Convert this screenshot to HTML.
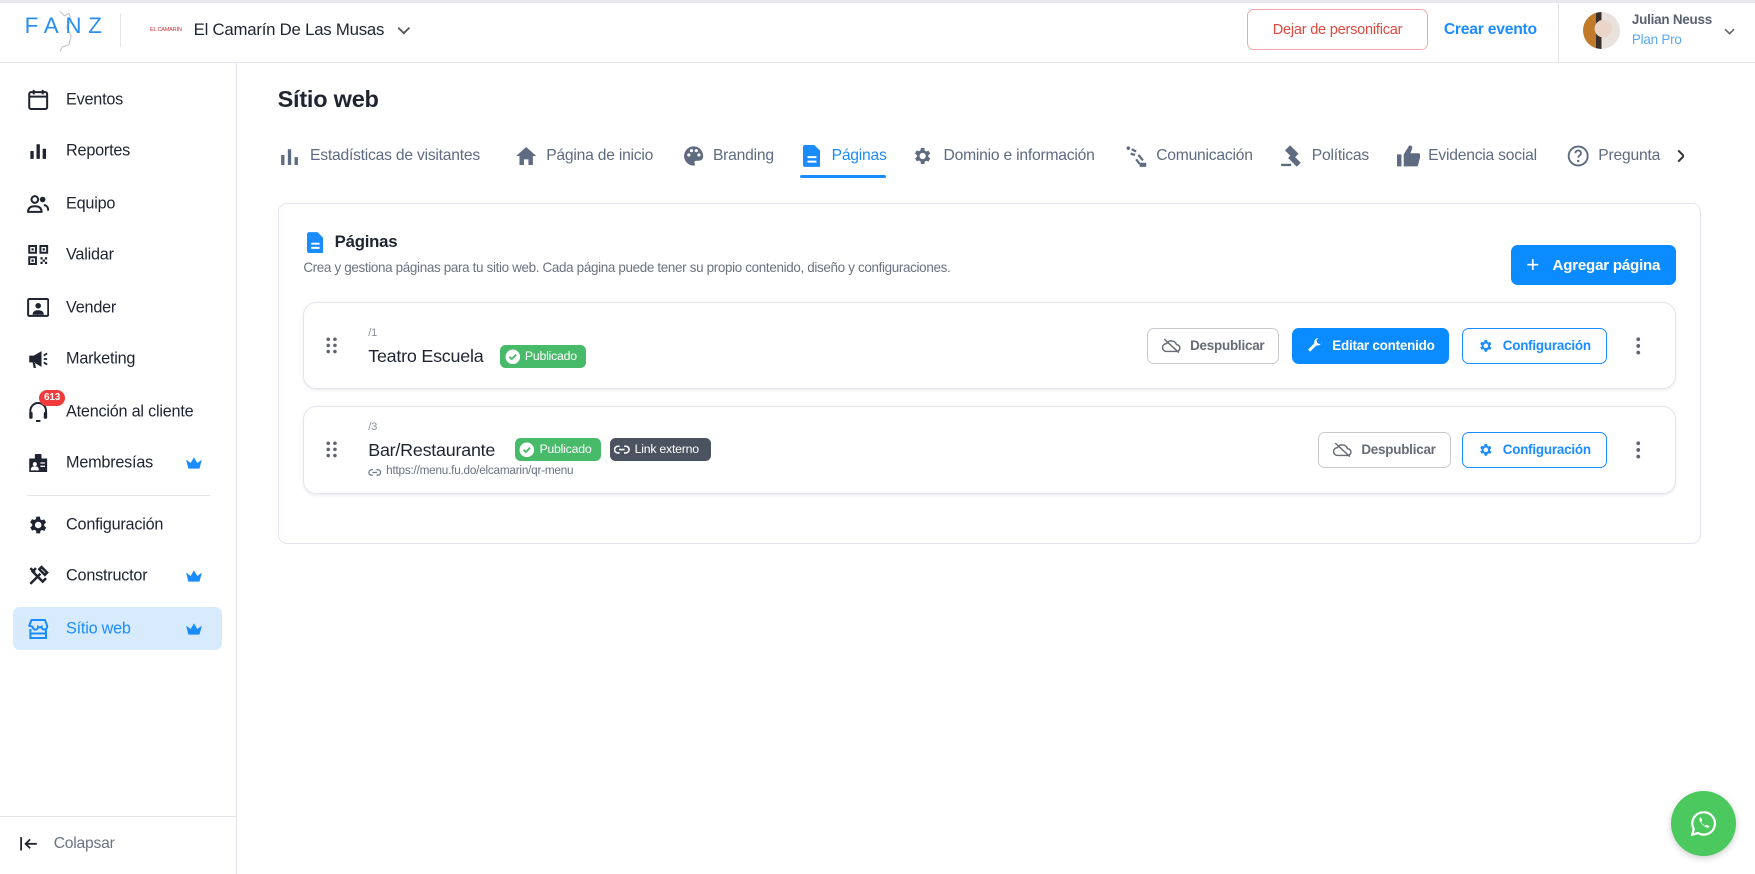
<!DOCTYPE html>
<html><head><meta charset="utf-8"><style>
*{box-sizing:border-box;margin:0;padding:0}
html,body{width:1755px;height:874px;overflow:hidden;background:#fff}
#root{zoom:1.11926;width:1568px;height:781px;position:relative;font-family:"Liberation Sans",sans-serif;color:#1f2430;letter-spacing:-0.2px}
.a{position:absolute;white-space:nowrap}
.topline{left:0;top:0;width:1568px;height:3px;background:#e8e8ec}
.hb{left:0;top:55px;width:1568px;height:1px;background:#e3e5ea}
.sb{left:211px;top:56px;width:1px;height:725px;background:#e3e5ea}
.nav{left:59px;font-size:14.5px;color:#1f2430;transform:translateY(-50%)}
.ico{left:24px;transform:translateY(-50%)}
.crown{left:165px;transform:translateY(-50%)}
.tab{font-size:14px;color:#5f6b80;transform:translateY(-50%)}
.ti{transform:translateY(-50%)}
.btn{border-radius:6px;font-size:12px;font-weight:bold;display:flex;align-items:center;justify-content:center;gap:8px}
.row{border:1px solid #e3e6ee;border-radius:12px;box-shadow:0 1px 3px rgba(0,0,0,.08);background:#fff}
.badge{border-radius:5px;font-size:11px;color:#fff;display:flex;align-items:center;gap:4px;padding-left:4px;height:21px}
</style></head><body><div id="root">
<div class="a topline"></div>
<div class="a hb"></div>
<div class="a sb"></div>
<!-- logo -->
<svg class="a" style="left:46px;top:8px" width="24" height="40" viewBox="0 0 24 40"><path d="M8 2 L12 6 L16 4 L18 10 L14 16 L18 24 L16 32 L10 34 L8 38" fill="none" stroke="#c2c6cc" stroke-width="1"/></svg>
<div class="a" style="left:22px;top:12px;font-size:20px;letter-spacing:6px;color:#2a8ff0;font-weight:300">FANZ</div>
<div class="a" style="left:107px;top:12px;width:1px;height:30px;background:#e3e5ea"></div>
<div class="a" style="left:134px;top:24px;font-size:5px;color:#d0343a">EL CAMARÍN</div>
<div class="a" style="left:173px;top:18px;font-size:15px;font-weight:500">El Camarín De Las Musas</div>
<svg class="a" style="left:354px;top:20px" width="14" height="14" viewBox="0 0 14 14"><path d="M2 5l5 5 5-5" fill="none" stroke="#555" stroke-width="1.6"/></svg>
<div class="a btn" style="left:1114px;top:8px;width:162px;height:37px;border:1px solid #f0a9a5;color:#e0483e;font-size:13px;font-weight:500">Dejar de personificar</div>
<div class="a" style="left:1290px;top:19px;font-size:14px;font-weight:bold;color:#1a8cff">Crear evento</div>
<div class="a" style="left:1392px;top:0;width:1px;height:55px;background:#e3e5ea"></div>
<div class="a" style="left:1414px;top:11px;width:33px;height:33px;border-radius:50%;background:radial-gradient(circle at 55% 45%,#e9d6c8 0 30%,transparent 31%),linear-gradient(90deg,#c07a2a 0 35%,#3a2e2a 35% 50%,#e9e2dc 50%)"></div>
<div class="a" style="left:1458px;top:11px;font-size:12px;font-weight:bold;color:#5a6170">Julian Neuss</div>
<div class="a" style="left:1458px;top:29px;font-size:12px;color:#5aa8f5">Plan Pro</div>
<svg class="a" style="left:1540px;top:24px" width="10" height="8" viewBox="0 0 10 8"><path d="M1 2l4 4 4-4" fill="none" stroke="#666" stroke-width="1.4"/></svg>

<!-- sidebar -->
<svg class="a ico" style="top:89px" width="20" height="20" viewBox="0 0 20 20"><rect x="2" y="3" width="16" height="15" rx="1.5" fill="none" stroke="#1f2430" stroke-width="1.8"/><path d="M2 7h16M6 1v4M14 1v4" stroke="#1f2430" stroke-width="1.8"/></svg>
<div class="a nav" style="top:89px">Eventos</div>
<svg class="a ico" style="top:135px" width="20" height="20" viewBox="0 0 20 20"><path d="M3 10h3v7H3zM8.5 4h3v13h-3zM14 8h3v9h-3z" fill="#1f2430"/></svg>
<div class="a nav" style="top:135px">Reportes</div>
<svg class="a ico" style="top:182px" width="20" height="20" viewBox="0 0 20 20"><circle cx="7" cy="6" r="3" fill="none" stroke="#1f2430" stroke-width="1.8"/><path d="M1 17c0-4 3-5 6-5s6 1 6 5z" fill="none" stroke="#1f2430" stroke-width="1.8"/><circle cx="14" cy="6" r="2.5" fill="#1f2430"/><path d="M15 11c2 0 4 1.5 4 5" stroke="#1f2430" stroke-width="1.8" fill="none"/></svg>
<div class="a nav" style="top:182px">Equipo</div>
<svg class="a ico" style="top:228px" width="20" height="20" viewBox="0 0 20 20"><path d="M2 2h6v6H2zM12 2h6v6h-6zM2 12h6v6H2z" fill="none" stroke="#1f2430" stroke-width="1.8"/><path d="M12 12h2v2h-2zM16 12h2v2h-2zM14 14h2v2h-2zM12 16h2v2h-2zM16 16h2v2h-2zM4 4h2v2H4zM14 4h2v2h-2zM4 14h2v2H4z" fill="#1f2430"/></svg>
<div class="a nav" style="top:228px">Validar</div>
<svg class="a ico" style="top:275px" width="20" height="20" viewBox="0 0 20 20"><rect x="1" y="2" width="18" height="15" rx="1" fill="none" stroke="#1f2430" stroke-width="1.8"/><circle cx="10" cy="8" r="2.5" fill="#1f2430"/><path d="M5 16c0-3 2-4 5-4s5 1 5 4z" fill="#1f2430"/></svg>
<div class="a nav" style="top:275px">Vender</div>
<svg class="a ico" style="top:321px" width="20" height="20" viewBox="0 0 20 20"><path d="M2 7h4l7-4v14l-7-4H2z M5 13l1 5h2l-1-5" fill="#1f2430"/><path d="M15 7l3-2M15 10h3M15 13l3 2" stroke="#1f2430" stroke-width="1.6"/></svg>
<div class="a nav" style="top:321px">Marketing</div>
<svg class="a ico" style="top:368px" width="20" height="20" viewBox="0 0 20 20"><path d="M3 12V9a7 7 0 0114 0v3" fill="none" stroke="#1f2430" stroke-width="1.8"/><rect x="2" y="10" width="3" height="6" rx="1" fill="#1f2430"/><rect x="15" y="10" width="3" height="6" rx="1" fill="#1f2430"/><path d="M8 18h4" stroke="#1f2430" stroke-width="1.8"/></svg>
<div class="a" style="left:35px;top:348px;width:23px;height:15px;border-radius:8px;background:#ef3b3b;color:#fff;font-size:9px;font-weight:bold;text-align:center;line-height:15px">613</div>
<div class="a nav" style="top:368px">Atención al cliente</div>
<svg class="a ico" style="top:414px" width="20" height="20" viewBox="0 0 20 20"><path d="M2 6h16v12H2z" fill="#1f2430"/><rect x="7" y="2" width="6" height="6" rx="1" fill="#1f2430"/><circle cx="7" cy="11" r="1.8" fill="#fff"/><path d="M4 16c0-2 1.5-2.5 3-2.5s3 .5 3 2.5zM12 10h4M12 13h4" stroke="#fff" fill="#fff" stroke-width="1.2"/></svg>
<div class="a nav" style="top:414px">Membresías</div>
<div class="a" style="left:24px;top:442px;width:164px;height:1px;background:#e3e5ea"></div>
<svg class="a ico" style="top:469px" width="20" height="20" viewBox="0 0 24 24"><path fill="#1f2430" d="M19.4 13a7.5 7.5 0 000-2l2.1-1.6-2-3.5-2.5 1a7 7 0 00-1.7-1L15 3h-4l-.4 2.7a7 7 0 00-1.7 1l-2.5-1-2 3.5L6.6 11a7.5 7.5 0 000 2l-2.1 1.6 2 3.5 2.5-1a7 7 0 001.7 1L11 21h4l.4-2.7a7 7 0 001.7-1l2.5 1 2-3.5zM13 15.5a3.5 3.5 0 110-7 3.5 3.5 0 010 7z" transform="translate(-1 0)"/></svg>
<div class="a nav" style="top:469px">Configuración</div>
<svg class="a ico" style="top:515px" width="20" height="20" viewBox="0 0 20 20"><path d="M3 17L12 8M8 3l-3 3 9 9 3-3M13 2l5 5-2 2-5-5z M3 3l4 4" stroke="#1f2430" stroke-width="2.2" fill="none"/></svg>
<div class="a nav" style="top:515px">Constructor</div>
<div class="a" style="left:12px;top:542px;width:186px;height:39px;border-radius:6px;background:#d7ebfd"></div>
<svg class="a ico" style="top:562px" width="20" height="20" viewBox="0 0 20 20"><path d="M2 7l2-5h12l2 5v1a2.5 2.5 0 01-5 0 2.5 2.5 0 01-3 0 2.5 2.5 0 01-5 0z" fill="none" stroke="#1a8cff" stroke-width="1.8"/><path d="M3 10v8h14v-8M3 14h14" fill="none" stroke="#1a8cff" stroke-width="1.8"/></svg>
<div class="a nav" style="top:562px;color:#1a8cff">Sítio web</div>
<svg class="a crown" style="top:414px" width="16" height="12" viewBox="0 0 16 12"><path d="M1 3l4 3 3-5 3 5 4-3-2 8H3z" fill="#1a8cff"/></svg>
<svg class="a crown" style="top:515px" width="16" height="12" viewBox="0 0 16 12"><path d="M1 3l4 3 3-5 3 5 4-3-2 8H3z" fill="#1a8cff"/></svg>
<svg class="a crown" style="top:562px" width="16" height="12" viewBox="0 0 16 12"><path d="M1 3l4 3 3-5 3 5 4-3-2 8H3z" fill="#1a8cff"/></svg>
<div class="a" style="left:0;top:729px;width:211px;height:1px;background:#e3e5ea"></div>
<svg class="a" style="left:18px;top:747px" width="16" height="14" viewBox="0 0 16 14"><path d="M1 1v12M15 7H5M9 3L5 7l4 4" fill="none" stroke="#1f2430" stroke-width="1.6"/></svg>
<div class="a" style="left:48px;top:746px;font-size:14px;color:#6b7280">Colapsar</div>

<!-- main -->
<div class="a" style="left:248px;top:77px;font-size:21px;font-weight:600">Sítio web</div>
<svg class="a ti" style="left:250px;top:139px" width="18" height="18" viewBox="0 0 18 18"><path d="M1 8h3v9H1zM7 3h3v14H7zM13 10h3v7h-3z" fill="#5f6b80"/></svg>
<div class="a tab" style="left:277px;top:139px">Estadísticas de visitantes</div>
<svg class="a ti" style="left:460px;top:139px" width="20" height="18" viewBox="0 0 20 18"><path d="M10 1L1 9h3v8h4v-5h4v5h4V9h3z" fill="#5f6b80"/></svg>
<div class="a tab" style="left:488px;top:139px">Página de inicio</div>
<svg class="a ti" style="left:610px;top:139px" width="19" height="19" viewBox="0 0 20 20"><path d="M10 1a9 9 0 000 18c1.2 0 1.6-1 1-2-.7-1 0-2.5 1.5-2.5H15a4 4 0 004-4C19 5 15 1 10 1z" fill="#5f6b80"/><circle cx="5.5" cy="9" r="1.5" fill="#fff"/><circle cx="8" cy="5" r="1.5" fill="#fff"/><circle cx="12.5" cy="5" r="1.5" fill="#fff"/><circle cx="15" cy="9" r="1.5" fill="#fff"/></svg>
<div class="a tab" style="left:637px;top:139px">Branding</div>
<svg class="a ti" style="left:717px;top:139px" width="16" height="20" viewBox="0 0 16 20"><path d="M2 0h8l6 6v12a2 2 0 01-2 2H2a2 2 0 01-2-2V2a2 2 0 012-2z" fill="#1a8cff"/><path d="M4 11h8M4 15h8" stroke="#fff" stroke-width="1.8"/></svg>
<div class="a tab" style="left:743px;top:139px;color:#1a8cff">Páginas</div>
<div class="a" style="left:715px;top:156px;width:77px;height:3px;border-radius:2px;background:#1a8cff"></div>
<svg class="a ti" style="left:815px;top:139px" width="19" height="19" viewBox="0 0 24 24"><path fill="#5f6b80" d="M19.4 13a7.5 7.5 0 000-2l2.1-1.6-2-3.5-2.5 1a7 7 0 00-1.7-1L15 3h-4l-.4 2.7a7 7 0 00-1.7 1l-2.5-1-2 3.5L6.6 11a7.5 7.5 0 000 2l-2.1 1.6 2 3.5 2.5-1a7 7 0 001.7 1L11 21h4l.4-2.7a7 7 0 001.7-1l2.5 1 2-3.5zM13 15.5a3.5 3.5 0 110-7 3.5 3.5 0 010 7z" transform="translate(-1 0)"/></svg>
<div class="a tab" style="left:843px;top:139px">Dominio e información</div>
<svg class="a ti" style="left:1005px;top:139px" width="20" height="20" viewBox="0 0 20 20"><circle cx="3" cy="3" r="1.6" fill="#5f6b80"/><path d="M6 4l4 2M5 8l4 1M12 9l4 5M10 13l3 4M14 17h4v2h-4z" stroke="#5f6b80" stroke-width="2"/></svg>
<div class="a tab" style="left:1033px;top:139px">Comunicación</div>
<svg class="a ti" style="left:1144px;top:139px" width="20" height="20" viewBox="0 0 20 20"><path d="M9 2l6 6-3 3-6-6zM10 9l7 7-2 2-7-7M1 18h9" stroke="#5f6b80" stroke-width="2.2" fill="#5f6b80"/></svg>
<div class="a tab" style="left:1172px;top:139px">Políticas</div>
<svg class="a ti" style="left:1248px;top:139px" width="21" height="19" viewBox="0 0 21 19"><path d="M0 8h4v11H0zM6 8l5-8c2 0 3 1 2.5 3L12 7h7a2 2 0 012 2l-2 8a2 2 0 01-2 2H6z" fill="#5f6b80"/></svg>
<div class="a tab" style="left:1276px;top:139px">Evidencia social</div>
<svg class="a ti" style="left:1400px;top:139px" width="20" height="20" viewBox="0 0 20 20"><circle cx="10" cy="10" r="8.5" fill="none" stroke="#5f6b80" stroke-width="1.7"/><path d="M7.5 7.5a2.5 2.5 0 015 0c0 2-2.5 2-2.5 4" fill="none" stroke="#5f6b80" stroke-width="1.7"/><circle cx="10" cy="14.5" r="1.1" fill="#5f6b80"/></svg>
<div class="a tab" style="left:1428px;top:139px">Pregunta</div>
<svg class="a ti" style="left:1497px;top:139px" width="8" height="12" viewBox="0 0 8 12"><path d="M2 1l5 5-5 5" fill="none" stroke="#333" stroke-width="1.8"/></svg>

<div class="a" style="left:248px;top:181px;width:1272px;height:305px;border:1px solid #e3e6ee;border-radius:8px"></div>
<svg class="a" style="left:274px;top:207px" width="15" height="19" viewBox="0 0 16 20"><path d="M2 0h8l6 6v12a2 2 0 01-2 2H2a2 2 0 01-2-2V2a2 2 0 012-2z" fill="#1a8cff"/><path d="M4 11h8M4 15h8" stroke="#fff" stroke-width="1.8"/></svg>
<div class="a" style="left:299px;top:207px;font-size:15px;font-weight:600">Páginas</div>
<div class="a" style="left:271px;top:232px;font-size:12px;color:#6b7280;letter-spacing:-0.3px">Crea y gestiona páginas para tu sitio web. Cada página puede tener su propio contenido, diseño y configuraciones.</div>
<div class="a btn" style="left:1350px;top:219px;width:147px;height:36px;background:#0a8bff;color:#fff;font-size:13.5px;gap:12px"><span style="font-size:20px;font-weight:300">+</span>Agregar página</div>

<!-- row 1 -->
<div class="a row" style="left:271px;top:270px;width:1226px;height:78px"></div>
<svg class="a" style="left:291px;top:301px" width="10" height="15" viewBox="0 0 10 15"><g fill="#5f6470"><circle cx="2" cy="2" r="1.6"/><circle cx="8" cy="2" r="1.6"/><circle cx="2" cy="7.5" r="1.6"/><circle cx="8" cy="7.5" r="1.6"/><circle cx="2" cy="13" r="1.6"/><circle cx="8" cy="13" r="1.6"/></g></svg>
<div class="a" style="left:329px;top:292px;font-size:10px;color:#8a909a">/1</div>
<div class="a" style="left:329px;top:309px;font-size:16px;font-weight:500">Teatro Escuela</div>
<div class="a badge" style="left:447px;top:308px;width:77px;background:#48bb6a"><svg width="14" height="14" viewBox="0 0 14 14"><circle cx="7" cy="7" r="6.5" fill="#fff"/><path d="M4 7l2 2 4-4" stroke="#48bb6a" stroke-width="1.6" fill="none"/></svg>Publicado</div>
<div class="a btn" style="left:1025px;top:293px;width:118px;height:32px;border:1px solid #c7c9ce;color:#666b75"><svg width="17" height="14" viewBox="0 0 17 14"><path d="M4 12h9a3 3 0 000-6 5 5 0 00-9-1 3.5 3.5 0 000 7zM2 1l13 12" fill="none" stroke="#666b75" stroke-width="1.3"/></svg>Despublicar</div>
<div class="a btn" style="left:1154px;top:293px;width:141px;height:32px;background:#0a8bff;color:#fff"><svg width="15" height="15" viewBox="0 0 16 16"><path d="M14 4a4 4 0 01-5 4l-6 6-2-2 6-6a4 4 0 014-5L9 3l1 3 3 1z" fill="#fff"/></svg>Editar contenido</div>
<div class="a btn" style="left:1306px;top:293px;width:130px;height:32px;border:1px solid #1a8cff;color:#1a8cff"><svg width="14" height="14" viewBox="0 0 24 24"><path fill="#1a8cff" d="M19.4 13a7.5 7.5 0 000-2l2.1-1.6-2-3.5-2.5 1a7 7 0 00-1.7-1L15 3h-4l-.4 2.7a7 7 0 00-1.7 1l-2.5-1-2 3.5L6.6 11a7.5 7.5 0 000 2l-2.1 1.6 2 3.5 2.5-1a7 7 0 001.7 1L11 21h4l.4-2.7a7 7 0 001.7-1l2.5 1 2-3.5zM13 15.5a3.5 3.5 0 110-7 3.5 3.5 0 010 7z" transform="translate(-1 0)"/></svg>Configuración</div>
<svg class="a" style="left:1462px;top:301px" width="4" height="16" viewBox="0 0 4 16"><g fill="#5f6470"><circle cx="2" cy="2" r="1.7"/><circle cx="2" cy="8" r="1.7"/><circle cx="2" cy="14" r="1.7"/></g></svg>

<!-- row 2 -->
<div class="a row" style="left:271px;top:363px;width:1226px;height:78px"></div>
<svg class="a" style="left:291px;top:394px" width="10" height="15" viewBox="0 0 10 15"><g fill="#5f6470"><circle cx="2" cy="2" r="1.6"/><circle cx="8" cy="2" r="1.6"/><circle cx="2" cy="7.5" r="1.6"/><circle cx="8" cy="7.5" r="1.6"/><circle cx="2" cy="13" r="1.6"/><circle cx="8" cy="13" r="1.6"/></g></svg>
<div class="a" style="left:329px;top:376px;font-size:10px;color:#8a909a">/3</div>
<div class="a" style="left:329px;top:393px;font-size:16px;font-weight:500">Bar/Restaurante</div>
<div class="a badge" style="left:460px;top:391px;width:77px;background:#48bb6a"><svg width="14" height="14" viewBox="0 0 14 14"><circle cx="7" cy="7" r="6.5" fill="#fff"/><path d="M4 7l2 2 4-4" stroke="#48bb6a" stroke-width="1.6" fill="none"/></svg>Publicado</div>
<div class="a badge" style="left:545px;top:391px;width:90px;background:#4b5260"><svg width="14" height="10" viewBox="0 0 14 10"><path d="M5 2H3.5a3 3 0 000 6H5M9 2h1.5a3 3 0 010 6H9M4.5 5h5" fill="none" stroke="#fff" stroke-width="1.4"/></svg>Link externo</div>
<svg class="a" style="left:329px;top:418px" width="12" height="8" viewBox="0 0 14 10"><path d="M5 2H3.5a3 3 0 000 6H5M9 2h1.5a3 3 0 010 6H9M4.5 5h5" fill="none" stroke="#6b7280" stroke-width="1.4"/></svg>
<div class="a" style="left:345px;top:415px;font-size:10.5px;color:#6b7280">https://menu.fu.do/elcamarin/qr-menu</div>
<div class="a btn" style="left:1178px;top:386px;width:118px;height:32px;border:1px solid #c7c9ce;color:#666b75"><svg width="17" height="14" viewBox="0 0 17 14"><path d="M4 12h9a3 3 0 000-6 5 5 0 00-9-1 3.5 3.5 0 000 7zM2 1l13 12" fill="none" stroke="#666b75" stroke-width="1.3"/></svg>Despublicar</div>
<div class="a btn" style="left:1306px;top:386px;width:130px;height:32px;border:1px solid #1a8cff;color:#1a8cff"><svg width="14" height="14" viewBox="0 0 24 24"><path fill="#1a8cff" d="M19.4 13a7.5 7.5 0 000-2l2.1-1.6-2-3.5-2.5 1a7 7 0 00-1.7-1L15 3h-4l-.4 2.7a7 7 0 00-1.7 1l-2.5-1-2 3.5L6.6 11a7.5 7.5 0 000 2l-2.1 1.6 2 3.5 2.5-1a7 7 0 001.7 1L11 21h4l.4-2.7a7 7 0 001.7-1l2.5 1 2-3.5zM13 15.5a3.5 3.5 0 110-7 3.5 3.5 0 010 7z" transform="translate(-1 0)"/></svg>Configuración</div>
<svg class="a" style="left:1462px;top:394px" width="4" height="16" viewBox="0 0 4 16"><g fill="#5f6470"><circle cx="2" cy="2" r="1.7"/><circle cx="2" cy="8" r="1.7"/><circle cx="2" cy="14" r="1.7"/></g></svg>

<!-- whatsapp -->
<div class="a" style="left:1493px;top:707px;width:58px;height:58px;border-radius:50%;background:#4cc95e;box-shadow:0 2px 6px rgba(0,0,0,.2)"></div>
<svg class="a" style="left:1510px;top:724px" width="24" height="24" viewBox="0 0 24 24"><path d="M12 2a10 10 0 00-8.6 15L2 22l5.2-1.4A10 10 0 1012 2z" fill="none" stroke="#fff" stroke-width="2"/><path d="M8.5 7.5c.5-1 1.2-1 1.6 0l.7 1.6c.2.5-.6 1.2-.8 1.5.8 1.6 2 2.8 3.5 3.5.3-.3 1-1 1.5-.8l1.6.7c1 .4 1 1.1 0 1.6-2 1.3-8.8-4.3-8.1-8.1z" fill="#fff"/></svg>
</div></body></html>
